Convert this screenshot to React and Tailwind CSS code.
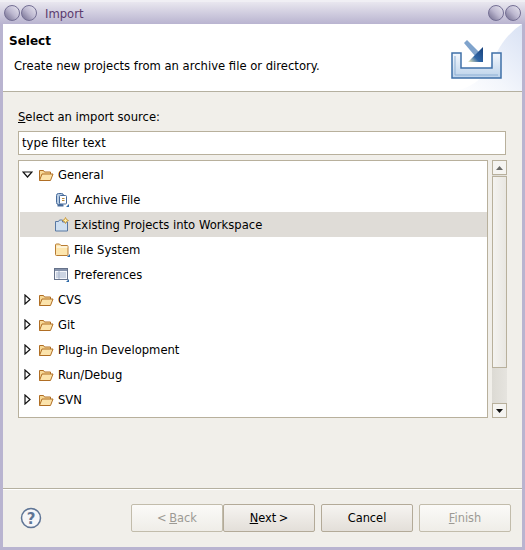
const FONT = 'font-["DejaVu_Sans",sans-serif]';

function Orb() {
  return (
    <div className="w-[16px] h-[16px] rounded-full border border-[#746f94] bg-gradient-to-tr from-[#6f6a8c] via-[#bdb8d0] to-[#e9e7f0]" />
  );
}

function OpenFolder() {
  return (
    <svg width="16" height="16" viewBox="0 0 16 16" className="shrink-0">
      <path d="M1.5 13.5V3.5h4l1 1.5h6v2" fill="#f7d998" stroke="#b06e24" />
      <path d="M1.5 13.5l2.5-6.5h11l-2.5 6.5z" fill="#fbe3ab" stroke="#b06e24" strokeLinejoin="round" />
    </svg>
  );
}

function ClosedFolder() {
  return (
    <svg width="16" height="16" viewBox="0 0 16 16" className="shrink-0">
      <path d="M1.5 12.5V3q0-1 1-1h3l1.5 1.5h6q1 0 1 1v8q0 1-1 1h-10.5q-1 0-1-1z" fill="#fde6ae" stroke="#b87c32" />
      <path d="M2.5 5h11" stroke="#fff" />
      <path d="M13 15l3-3v3z" fill="#2f6aa8" />
    </svg>
  );
}

function ArchiveIcon() {
  return (
    <svg width="16" height="16" viewBox="0 0 16 16" className="shrink-0">
      <rect x="2.5" y="1.5" width="7" height="11" rx="2" fill="#b9cde4" stroke="#466a9a" />
      <rect x="5.5" y="3.5" width="7" height="8.5" rx="1" fill="#fff" stroke="#466a9a" />
      <path d="M8 6.5h2.5M8 8.5h2.5" stroke="#b98a3c" />
      <path d="M3.5 13.5h6" stroke="#466a9a" strokeWidth="2" />
      <path d="M12 15l3-3v3z" fill="#2f6aa8" />
    </svg>
  );
}

function ProjectIcon() {
  return (
    <svg width="16" height="16" viewBox="0 0 16 16" className="shrink-0">
      <path d="M1.5 14V4.5h3l1-1.5h3v2h5v9z" fill="#cfdff0" stroke="#5878a3" />
      <path d="M11.5 0.5l1 2 2 1-2 1-1 2-1-2-2-1 2-1z" fill="#fff0a8" stroke="#c48c24" strokeWidth="0.8" />
    </svg>
  );
}

function PrefsIcon() {
  return (
    <svg width="16" height="16" viewBox="0 0 16 16" className="shrink-0">
      <rect x="0.5" y="1.5" width="13" height="11" fill="#f4f6fa" stroke="#66728a" />
      <rect x="1" y="2" width="12" height="2" fill="#8592ab" />
      <path d="M2 6h10M2 8h10M2 10h10" stroke="#a4b2ca" />
      <path d="M5 4v8" stroke="#a4b2ca" />
      <path d="M12 15l3-3v3z" fill="#2f6aa8" />
    </svg>
  );
}

function ImportBanner() {
  return (
    <svg width="78" height="67" viewBox="0 0 78 67" className="absolute right-0 top-0">
      <defs>
        <linearGradient id="sky" x1="1" y1="0" x2="0" y2="1">
          <stop offset="0" stopColor="#d9e2f4" />
          <stop offset="0.6" stopColor="#f3f6fc" />
          <stop offset="1" stopColor="#ffffff" />
        </linearGradient>
        <linearGradient id="tray" x1="0" y1="0" x2="0" y2="1">
          <stop offset="0" stopColor="#f4f8fd" />
          <stop offset="1" stopColor="#bcd2ea" />
        </linearGradient>
        <linearGradient id="head" x1="0" y1="1" x2="1" y2="0">
          <stop offset="0" stopColor="#f8f3c0" />
          <stop offset="0.4" stopColor="#2f66a6" />
          <stop offset="1" stopColor="#16407a" />
        </linearGradient>
      </defs>
      <path d="M78 0V67H10Q40 62 52 30Q62 10 78 0z" fill="url(#sky)" />
      {/* tray */}
      <path d="M8 29h9v15h31V29h9v25H8z" fill="url(#tray)" stroke="#3f70a8" strokeWidth="1.5" />
      <path d="M11 32v19h43" fill="none" stroke="#8fb0d4" />
      {/* arrow */}
      <path d="M20 19l3-3 12 12-4 4z" fill="#7fa3cc" />
      <path d="M39 23v15H24z" fill="url(#head)" />
    </svg>
  );
}

function Row({ label, icon, indent, open, closed, selected }) {
  return (
    <div className={`h-[25px] flex items-center ${selected ? 'bg-[#dfdcd7]' : ''}`}>
      {indent ? (
        <div className="w-[34px] shrink-0" />
      ) : (
        <div className="w-[18px] shrink-0 flex justify-center">
          {open && (
            <svg width="11" height="7" viewBox="0 0 11 7" className="ml-[-3px]">
              <path d="M1 1h9L5.5 6z" fill="#fff" stroke="#111" strokeWidth="1.2" />
            </svg>
          )}
          {closed && (
            <svg width="7" height="11" viewBox="0 0 7 11" className="ml-[-4px]">
              <path d="M1 1v9l5-4.5z" fill="#fff" stroke="#111" strokeWidth="1.2" />
            </svg>
          )}
        </div>
      )}
      {icon}
      <span className="ml-[4px] pt-[2px] text-[11.6px] text-black leading-none">{label}</span>
    </div>
  );
}

function Btn({ children, disabled, className }) {
  return (
    <div
      className={`w-[92px] h-[28px] pt-[3px] flex items-center justify-center rounded-[2px] border text-[11.4px] [word-spacing:-1px] ${
        disabled
          ? 'border-[#c2bcab] bg-gradient-to-b from-[#fbfaf8] to-[#efede8] text-[#9c9a94]'
          : 'border-[#b3aa98] bg-gradient-to-b from-[#f6f4f1] to-[#e3dfd9] text-black'
      } ${className || ''}`}
    >
      {children}
    </div>
  );
}

export default function App() {
  return (
    <div className={`w-[525px] h-[550px] flex flex-col overflow-hidden bg-[#b9b4d0] ${FONT}`}>
      <div className="h-[24px] shrink-0 flex items-center bg-gradient-to-b from-[#e9e7ef] to-[#b9b4d0] border-t-2 border-[#f0eff4]">
        <div className="flex gap-[1px] ml-[4px]">
          <Orb />
          <Orb />
        </div>
        <span className="ml-[8px] pt-[3px] text-[11.6px] text-[#5b3a6e]">Import</span>
        <div className="flex gap-[1px] ml-auto mr-[4px]">
          <Orb />
          <Orb />
        </div>
      </div>

      <div className="flex-1 mx-[3px] mb-[3px] flex flex-col bg-[#f1efea] min-h-0">
        <div className="h-[68px] shrink-0 bg-white border-b border-[#b5b0a0] relative flex flex-col">
          <ImportBanner />
          <span className="mt-[10px] ml-[6px] text-[12px] font-bold text-black leading-[14px] relative">Select</span>
          <span className="mt-[11px] ml-[11px] text-[11.6px] text-black leading-[14px] relative">
            Create new projects from an archive file or directory.
          </span>
        </div>

        <div className="flex-1 flex flex-col px-[15px] min-h-0">
          <div className="mt-[18px] text-[11.6px] leading-[14px] text-black">
            <span className="underline">S</span>elect an import source:
          </div>
          <div className="mt-[7px] h-[24px] pt-[2px] border border-[#b8b09c] bg-white flex items-center px-[3px] mr-[1px] text-[11.7px] text-black">
            type filter text
          </div>

          <div className="mt-[5px] flex items-start">
            <div className="w-[470px] h-[258px] border border-[#b8b09c] bg-white pl-[1px] pt-[1px]">
              <Row label="General" icon={<OpenFolder />} open />
              <Row label="Archive File" icon={<ArchiveIcon />} indent />
              <Row label="Existing Projects into Workspace" icon={<ProjectIcon />} indent selected />
              <Row label="File System" icon={<ClosedFolder />} indent />
              <Row label="Preferences" icon={<PrefsIcon />} indent />
              <Row label="CVS" icon={<OpenFolder />} closed />
              <Row label="Git" icon={<OpenFolder />} closed />
              <Row label="Plug-in Development" icon={<OpenFolder />} closed />
              <Row label="Run/Debug" icon={<OpenFolder />} closed />
              <Row label="SVN" icon={<OpenFolder />} closed />
            </div>
            <div className="ml-[4px] w-[15px] h-[258px] flex flex-col bg-gradient-to-r from-[#dcdad4] to-[#e6e4df]">
              <div className="h-[15px] shrink-0 border border-[#b8b09c] bg-[#f5f4f1] flex items-center justify-center">
                <svg width="7" height="4" viewBox="0 0 7 4"><path d="M3.5 0l3.5 4h-7z" fill="#6b6b68" /></svg>
              </div>
              <div className="h-[192px] border border-[#b8b09c] bg-gradient-to-r from-[#f4f3f0] to-[#e9e7e2] mt-[1px]" />
              <div className="flex-1" />
              <div className="h-[15px] shrink-0 border border-[#b8b09c] bg-[#f5f4f1] flex items-center justify-center">
                <svg width="7" height="4" viewBox="0 0 7 4"><path d="M0 0h7l-3.5 4z" fill="#111" /></svg>
              </div>
            </div>
          </div>
        </div>

        <div className="h-[59px] shrink-0 border-t border-[#b5b0a0] shadow-[inset_0_1px_0_#fff] flex items-center pb-[1px]">
          <svg width="22" height="22" viewBox="0 0 22 22" className="ml-[17px]">
            <circle cx="11" cy="11" r="9.5" fill="#f6f6f8" stroke="#5f7596" strokeWidth="1.5" />
            <text x="11" y="16.5" textAnchor="middle" fontSize="15" fontWeight="bold" fill="#5f7596" fontFamily="DejaVu Sans">?</text>
          </svg>
          <div className="ml-auto mr-[11px] flex">
            <Btn disabled><span>&lt; <span className="underline">B</span>ack</span></Btn>
            <Btn><span><span className="underline">N</span>ext &gt;</span></Btn>
            <Btn className="ml-[6px]">Cancel</Btn>
            <Btn disabled className="ml-[6px]"><span><span className="underline">F</span>inish</span></Btn>
          </div>
        </div>
      </div>
    </div>
  );
}
